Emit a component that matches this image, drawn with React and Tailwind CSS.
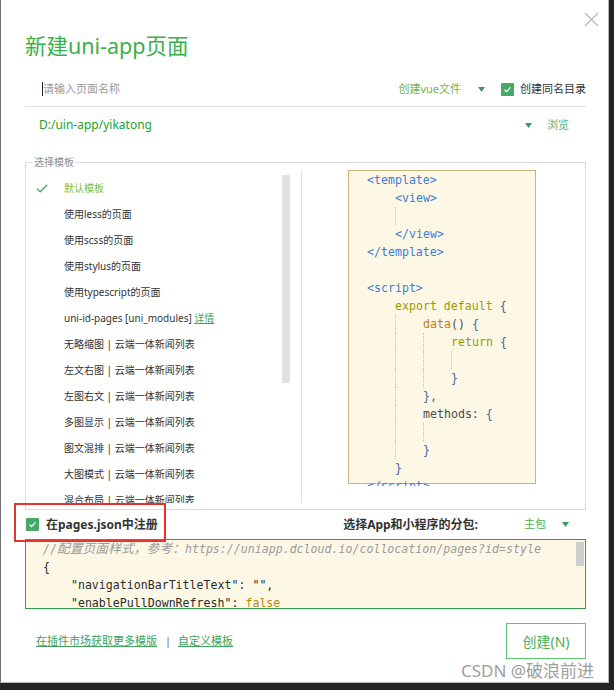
const B = 'text-[#3d7bd6]';
const K = 'text-[#9c9900]';
const P = 'text-[#46649a]';
const F = 'text-[#c27c14]';
const D = 'text-[#4a4a4a]';

const code = [
  { i: 0, g: [], t: [['<template>', B]] },
  { i: 1, g: [], t: [['<view>', B]] },
  { i: 0, g: [1], t: [] },
  { i: 1, g: [], t: [['</view>', B]] },
  { i: 0, g: [], t: [['</template>', B]] },
  { i: 0, g: [], t: [] },
  { i: 0, g: [], t: [['<script>', B]] },
  { i: 1, g: [], t: [['export default ', K], ['{', P]] },
  { i: 2, g: [1], t: [['data', F], ['() ', D], ['{', P]] },
  { i: 3, g: [1, 2], t: [['return ', K], ['{', P]] },
  { i: 0, g: [1, 2, 3], t: [] },
  { i: 3, g: [1, 2], t: [['}', P]] },
  { i: 2, g: [1], t: [['},', P]] },
  { i: 2, g: [1], t: [['methods: ', D], ['{', P]] },
  { i: 0, g: [1, 2], t: [] },
  { i: 2, g: [1], t: [['}', P]] },
  { i: 1, g: [], t: [['}', P]] },
  { i: 0, g: [], t: [['</script>', B]] },
];

const items = [
  '使用less的页面',
  '使用scss的页面',
  '使用stylus的页面',
  '使用typescript的页面',
];
const news = ['无略缩图', '左文右图', '左图右文', '多图显示', '图文混排', '大图模式', '混合布局'];

function Tri({ className = '' }) {
  return (
    <svg className={className} width="7" height="5" viewBox="0 0 7 5">
      <path d="M0 0H7L3.5 5Z" fill="#3f9a60" />
    </svg>
  );
}

function Box({ className = '' }) {
  return (
    <span className={`flex h-[13px] w-[13px] items-center justify-center rounded-[1px] bg-[#48a868] ${className}`}>
      <svg width="9" height="9" viewBox="0 0 9 9">
        <path d="M1.6 4.7L3.6 6.6L7.5 2.4" stroke="white" strokeWidth="1.3" fill="none" />
      </svg>
    </span>
  );
}

function CodeLine({ line }) {
  const n = Math.max(line.i, ...(line.g.length ? line.g.map((x) => x + 1) : [0]));
  const spans = [];
  for (let k = 0; k < n; k++) {
    spans.push(
      <span
        key={k}
        className={`inline-block h-[18px] w-[28px] shrink-0 ${line.g.includes(k) ? 'border-l border-dotted border-[#c4c4c4]' : ''}`}
      />
    );
  }
  return (
    <div className="flex h-[18px] items-center whitespace-pre leading-[18px]">
      {spans}
      {line.t.map(([s, c], j) => (
        <span key={j} className={c}>
          {s}
        </span>
      ))}
    </div>
  );
}

function Row({ children, check }) {
  return (
    <div className="flex h-[26px] shrink-0 items-center pl-[10px]">
      <span className="flex w-[12px] items-center">
        {check && (
          <svg width="12" height="9" viewBox="0 0 12 9">
            <path d="M0.8 4.6L4.2 7.8L11.2 0.8" stroke="#46a862" strokeWidth="1.3" fill="none" />
          </svg>
        )}
      </span>
      <span className="ml-[16px] whitespace-nowrap text-[10px] text-[#333]">{children}</span>
    </div>
  );
}

export default function App() {
  return (
    <div className="relative h-[690px] w-[614px] overflow-hidden bg-[#242424] font-['Noto_Sans','Noto_Sans_CJK_SC',sans-serif]">
      <div className="relative h-[683px] w-[609px] border-b border-l border-r border-b-[#b8b8b8] border-l-[#707070] border-r-[#b8b8b8] bg-white">
        <svg className="absolute left-[583px] top-[12px]" width="15" height="15" viewBox="0 0 15 15">
          <path d="M1 1L14 14M14 1L1 14" stroke="#b5b5b5" strokeWidth="1.1" />
        </svg>

        <div className="ml-[24px] flex w-[561px] flex-col pt-[32px]">
          <div className="h-[28px] text-[21.5px] leading-[28px] text-[#3aaf4a]">新建uni-app页面</div>

          <div className="mt-[16px] flex h-[31px] items-center border-b border-[#dedede] pb-[4px]">
            <span className="ml-[17px] h-[14px] w-px bg-[#222]" />
            <span className="text-[11px] text-[#9a9a9a]">请输入页面名称</span>
            <div className="ml-auto flex items-center">
              <span className="text-[11px] text-[#74b446]">创建vue文件</span>
              <Tri className="ml-[17px]" />
              <Box className="ml-[16px]" />
              <span className="ml-[6px] text-[11px] text-[#333]">创建同名目录</span>
            </div>
          </div>

          <div className="flex h-[36px] items-center">
            <span className="ml-[14px] text-[12px] text-[#22a32a]">D:/uin-app/yikatong</span>
            <Tri className="ml-auto" />
            <span className="ml-[15px] mr-[17px] text-[11px] text-[#56b278]">浏览</span>
          </div>

          <div className="relative mt-[19px] h-[348px] border border-[#dcdcdc]">
            <span className="absolute -top-[8px] left-[7px] bg-white px-px text-[10px] leading-[14px] text-[#8c8c8c]">
              选择模板
            </span>
            <div className="flex h-[340px] overflow-hidden">
              <div className="flex w-[275px] shrink-0">
                <div className="flex w-[256px] flex-col pt-[12px]">
                  <Row check>
                    <span className="text-[#7cbf42]">默认模板</span>
                  </Row>
                  {items.map((s) => (
                    <Row key={s}>{s}</Row>
                  ))}
                  <Row>
                    uni-id-pages [uni_modules] <span className="text-[#3ea85c] underline">详情</span>
                  </Row>
                  {news.map((s) => (
                    <Row key={s}>{s} | 云端一体新闻列表</Row>
                  ))}
                </div>
                <div className="mt-[12px] h-[208px] w-[8px] bg-[#e2e2e2]" />
              </div>
              <div className="mt-[7px] h-[333px] flex-1 border-l border-[#e0e0e0]">
                <div className="ml-[46px] h-[316px] w-[188px] overflow-hidden">
                  <div className="h-[314px] border border-[#c9b47e] bg-[#fdf8e6] pl-[18px] font-['DejaVu_Sans_Mono','Noto_Sans_CJK_SC',monospace] text-[11.6px]">
                    {code.map((l, idx) => (
                      <CodeLine key={idx} line={l} />
                    ))}
                  </div>
                </div>
              </div>
            </div>
          </div>

          <div className="flex h-[29px] items-center">
            <Box className="ml-px" />
            <span className="ml-[7px] text-[12px] font-bold text-[#333]">在pages.json中注册</span>
            <span className="ml-auto text-[12px] font-bold text-[#333]">选择App和小程序的分包:</span>
            <span className="ml-[46px] text-[11px] text-[#4caf50]">主包</span>
            <Tri className="ml-[16px] mr-[17px]" />
          </div>

          <div className="relative h-[70px] overflow-hidden border border-[#2e9e50] bg-[#fdf8e6] pl-[17px] font-['DejaVu_Sans_Mono','Noto_Sans_CJK_SC',monospace] text-[11.6px] leading-[18px] text-[#2b2b2b]">
            <div className="whitespace-pre italic text-[#9a9a9a]">
              //<span className="text-[12.8px]">配置页面样式，参考：</span>https://uniapp.dcloud.io/collocation/pages?id=style
            </div>
            <div className="whitespace-pre">{'{'}</div>
            <div className="whitespace-pre">{'    "navigationBarTitleText": "",'}</div>
            <div className="whitespace-pre">
              {'    "enablePullDownRefresh": '}
              <span className="text-[#b8860b]">false</span>
            </div>
            <div className="absolute right-px top-[2px] h-[24px] w-[8px] bg-[#cfcfcf]" />
          </div>

          <div className="mt-[14px] flex h-[36px] items-center">
            <span className="ml-[11px] text-[11px] text-[#3ea25e] underline">在插件市场获取更多模版</span>
            <span className="ml-[8px] text-[11px] text-[#666]">|</span>
            <span className="ml-[7px] text-[11px] text-[#3ea25e] underline">自定义模板</span>
            <button className="ml-auto flex h-[36px] w-[80px] items-center justify-center border border-[#5cc870] text-[14px] text-[#4caf50]">
              创建(N)
            </button>
          </div>
        </div>

        <div className="absolute left-[13px] top-[503px] h-[39px] w-[152px] border-2 border-[#e8322c]" />
      </div>
      <div className="absolute left-[461px] top-[659px] text-[17px] leading-[24px] text-[#9e9e9e]">CSDN @破浪前进</div>
    </div>
  );
}
